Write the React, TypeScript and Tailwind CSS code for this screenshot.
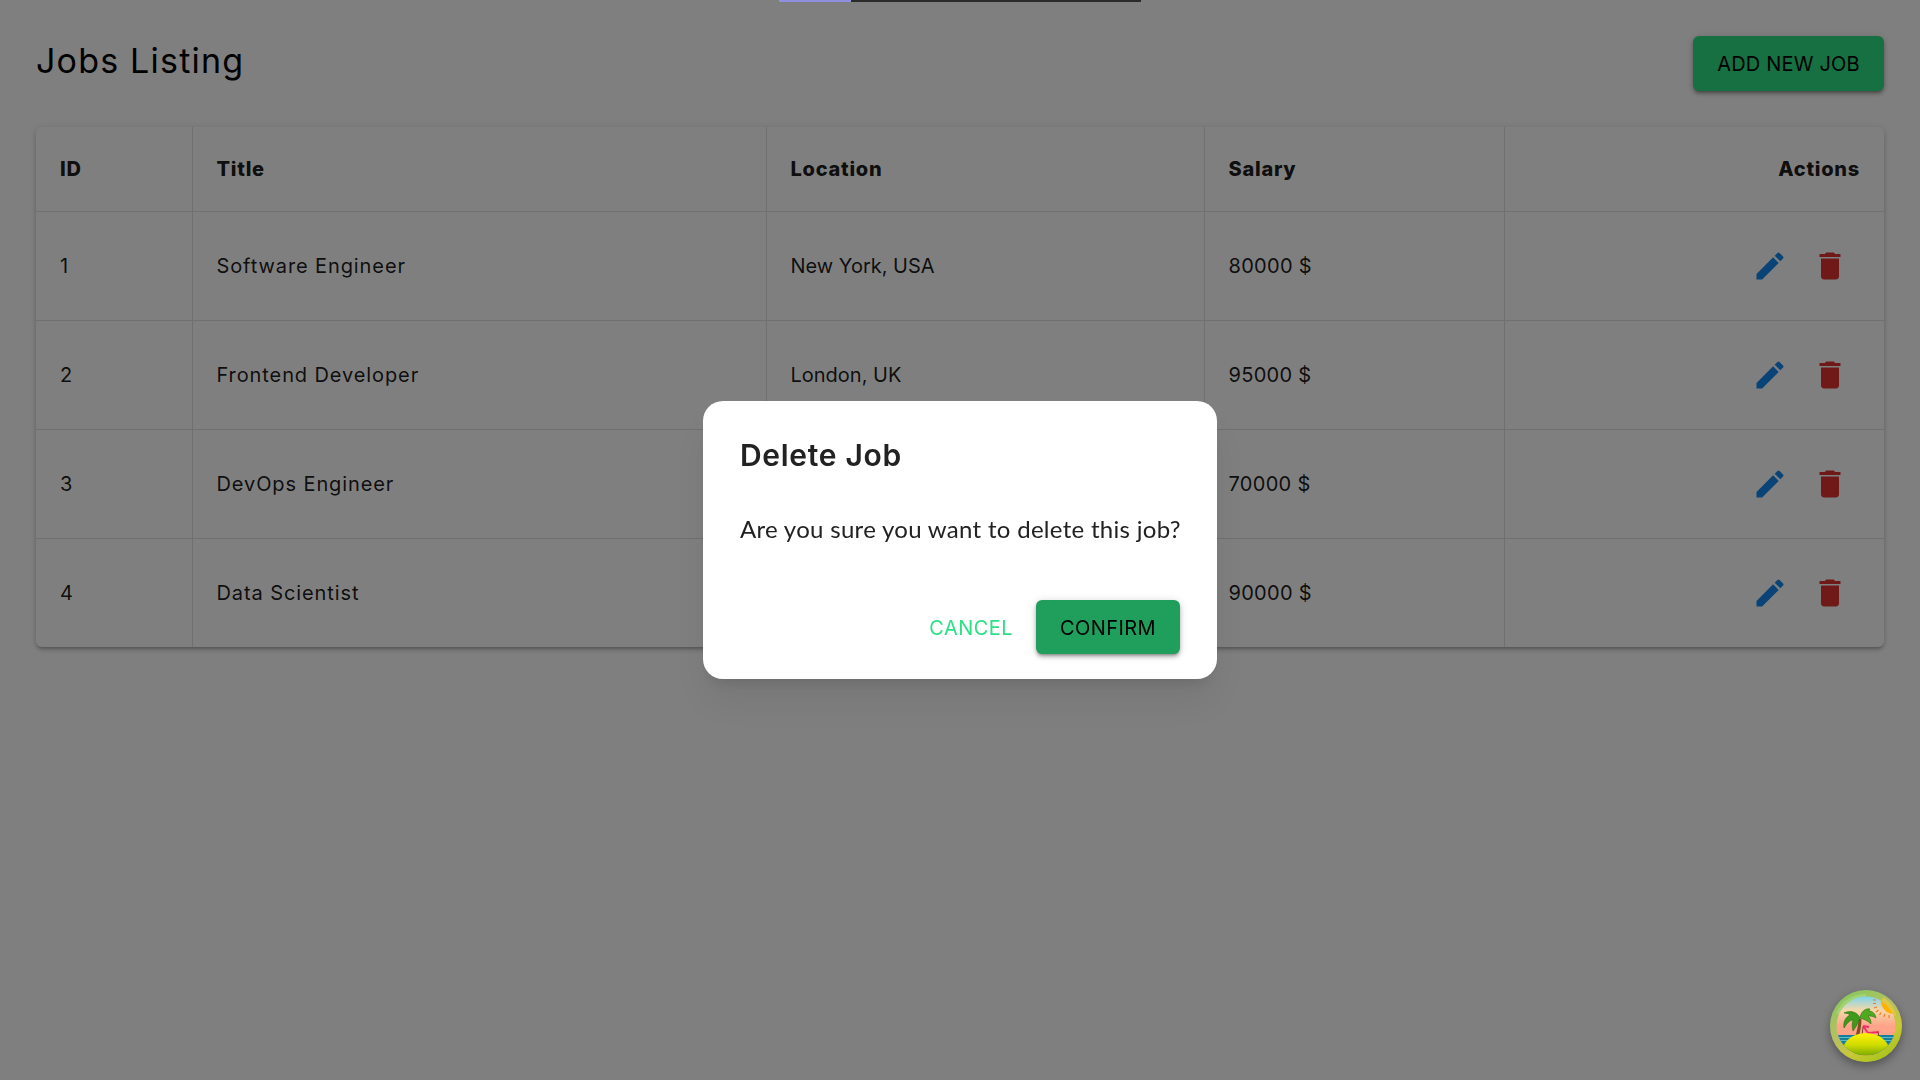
const jobs = [
  { id: 1, title: 'Software Engineer', location: 'New York, USA', salary: '80000 $' },
  { id: 2, title: 'Frontend Developer', location: 'London, UK', salary: '95000 $' },
  { id: 3, title: 'DevOps Engineer', location: 'Berlin, Germany', salary: '70000 $' },
  { id: 4, title: 'Data Scientist', location: 'San Francisco, USA', salary: '90000 $' },
];

function EditIcon() {
  return (
    <svg viewBox="0 0 24 24" className="block w-9 h-9 fill-[#1488ee]">
      <path d="M3 17.25V21h3.75L17.81 9.94l-3.75-3.75L3 17.25zM20.71 7.04c.39-.39.39-1.02 0-1.41l-2.34-2.34a.9959.9959 0 0 0-1.41 0l-1.83 1.83 3.75 3.75 1.83-1.83z" />
    </svg>
  );
}

function TrashIcon() {
  return (
    <svg viewBox="0 0 24 24" className="block w-9 h-9 fill-[#de3232]">
      <path d="M6 19c0 1.1.9 2 2 2h8c1.1 0 2-.9 2-2V7H6v12zM19 4h-3.5l-1-1h-5l-1 1H5v2h14V4z" />
    </svg>
  );
}

// beach badge in the bottom right corner
function BeachLogo() {
  return (
    <svg viewBox="0 0 72 72" className="block w-full h-full">
      <defs>
        <linearGradient id="ring" x1="0.2" y1="0" x2="0.8" y2="1">
          <stop offset="0" stopColor="#86c860" />
          <stop offset="0.45" stopColor="#b8c060" />
          <stop offset="0.7" stopColor="#c8c838" />
          <stop offset="1" stopColor="#a4c414" />
        </linearGradient>
        <linearGradient id="sky" x1="0" y1="0" x2="0" y2="1">
          <stop offset="0.08" stopColor="#78d4f2" />
          <stop offset="0.28" stopColor="#f5d8a8" />
          <stop offset="0.5" stopColor="#ffa488" />
        </linearGradient>
        <linearGradient id="hill" x1="0" y1="0" x2="0" y2="1">
          <stop offset="0" stopColor="#fff200" />
          <stop offset="0.3" stopColor="#d0dc00" />
          <stop offset="0.6" stopColor="#6fa400" />
          <stop offset="1" stopColor="#3f7c00" />
        </linearGradient>
        <clipPath id="inner">
          <circle cx="36" cy="36" r="29.5" />
        </clipPath>
      </defs>
      <circle cx="36" cy="36" r="36" fill="url(#ring)" />
      <path d="M8 24a30 30 0 0 1 28-18" stroke="#a8dc80" strokeWidth="4" fill="none" opacity="0.6" />
      <path d="M52 9a31 31 0 0 1 12 17" stroke="#e8c840" strokeWidth="5" fill="none" opacity="0.8" />
      <g clipPath="url(#inner)">
        <rect x="0" y="0" width="72" height="72" fill="url(#sky)" />
        <circle cx="64" cy="11" r="13" fill="#ffb000" />
        <g stroke="#f47a20" strokeWidth="1.2">
          <path d="M43 10h3M43 13.500h3M44 18l3-1M46 22l2.500-2M49.500 25l1.500-2.500M54 27l.7-3M59 28l.2-3" />
        </g>
        <rect x="0" y="45" width="72" height="20" fill="#177f9c" />
        <path d="M0 47.500h72M0 50.500h72" stroke="#58bcd0" strokeWidth="1" />
        <path d="M28.500 29c0 6-1.500 11-3 17l3.500 0c1.500-6 2.500-11 2.500-17z" fill="#7c4f24" />
        <g stroke="#2a6e12" strokeWidth="0.6">
          <path d="M30 28c-3-6-9-8-16-5 3 0 5 1 6 2-4 2-7 6-6 13 3-5 6-8 9-8-1 3-1 7 0 11 3-4 5-8 7-13z" fill="#3f9a1c" />
          <path d="M30 28c1-6 5-10 10-9-1 1-1 2-1 2 3 0 6 2 7 7-3-2-6-2-8-2 2 2 3 4 3 8-3-3-7-5-11-6z" fill="#4faa22" />
        </g>
        <path d="M33 36l5 7 11-1M33 36l6 1" stroke="#f0306a" strokeWidth="2" fill="none" />
        <path d="M33 37l-1 9M39 43v4M48 42l1 5" stroke="#7a4030" strokeWidth="1" />
        <ellipse cx="36" cy="63" rx="24" ry="20" fill="url(#hill)" />
      </g>
    </svg>
  );
}

export default function App() {
  return (
    <div className="relative min-h-screen bg-white font-['Inter',sans-serif] text-black/90">
      <div className="p-9">
        <div className="flex items-start justify-between mb-9">
          <h1 className="text-[34px] leading-[50px] font-normal tracking-[1.2px] text-black">Jobs Listing</h1>
          <button
            type="button"
            className="h-[55px] w-[191px] rounded-[6px] bg-[#2ce085] text-[20px] font-normal tracking-[0.2px] text-black shadow-[0_3px_3px_-2px_rgba(0,0,0,0.3),0_3px_4px_0_rgba(0,0,0,0.2),0_1px_8px_0_rgba(0,0,0,0.15)]"
          >
            ADD NEW JOB
          </button>
        </div>

        <div className="rounded-[6px] bg-white shadow-[0_3px_3px_-2px_rgba(0,0,0,0.2),0_3px_4px_0_rgba(0,0,0,0.14),0_1px_8px_0_rgba(0,0,0,0.12)] overflow-hidden">
          <table className="w-full table-fixed border-collapse text-[20px] font-normal">
            <colgroup>
              <col className="w-[156px]" />
              <col className="w-[574px]" />
              <col className="w-[438px]" />
              <col className="w-[300px]" />
              <col />
            </colgroup>
            <thead>
              <tr className="h-[84px] border-b border-[#e0e0e0] text-left tracking-[0.75px]">
                <th className="px-6 border-r border-[#e0e0e0] font-extrabold">ID</th>
                <th className="px-6 border-r border-[#e0e0e0] font-extrabold">Title</th>
                <th className="px-6 border-r border-[#e0e0e0] font-extrabold">Location</th>
                <th className="px-6 border-r border-[#e0e0e0] font-extrabold">Salary</th>
                <th className="px-6 text-right font-extrabold">Actions</th>
              </tr>
            </thead>
            <tbody>
              {jobs.map((job, idx) => (
                <tr key={job.id} className={idx < jobs.length - 1 ? 'h-[109px] border-b border-[#e0e0e0]' : 'h-[109px]'}>
                  <td className="px-6 border-r border-[#e0e0e0]">{job.id}</td>
                  <td className="px-6 border-r border-[#e0e0e0] tracking-[0.9px]">{job.title}</td>
                  <td className="px-6 border-r border-[#e0e0e0]">{job.location}</td>
                  <td className="px-6 border-r border-[#e0e0e0] tracking-[0.3px]">{job.salary}</td>
                  <td className="px-6">
                    <div className="flex justify-end">
                      <button type="button" className="p-3"><EditIcon /></button>
                      <button type="button" className="p-3"><TrashIcon /></button>
                    </div>
                  </td>
                </tr>
              ))}
            </tbody>
          </table>
        </div>
      </div>

      {/* Dialog overlay */}
      <div className="fixed inset-0 flex items-center justify-center bg-black/50">
        <div className="w-[514px] h-[278px] rounded-[20px] bg-white pt-9 pb-9 pl-[37px] pr-[37px] flex flex-col shadow-[0_11px_15px_-7px_rgba(0,0,0,0.12),0_24px_38px_3px_rgba(0,0,0,0.06)]">
          <h2 className="text-[30px] leading-[36px] font-semibold tracking-[0.7px] text-[#222]">Delete Job</h2>
          <p className="mt-[38px] font-['Lato',sans-serif] text-[24px] leading-[36px] tracking-[0.3px] font-normal whitespace-nowrap text-[#222]">Are you sure you want to delete this job?</p>
          <div className="mt-auto -mb-[11px] flex items-center justify-end gap-[23px]">
            <button type="button" className="text-[20px] tracking-[0.45px] leading-[30px] pt-px text-[#2ce085]">CANCEL</button>
            <button
              type="button"
              className="h-[54px] w-[144px] rounded-[6px] bg-[#1f9e5c] pt-px text-[20px] tracking-[0.4px] text-black shadow-[0_3px_3px_-2px_rgba(0,0,0,0.3),0_3px_4px_0_rgba(0,0,0,0.2),0_1px_8px_0_rgba(0,0,0,0.15)]"
            >
              CONFIRM
            </button>
          </div>
        </div>
      </div>

      {/* top loading bar */}
      <div className="fixed top-0 left-[779px] flex h-[2px] w-[362px]">
        <div className="w-[72px] bg-[#8f8fdf]" />
        <div className="flex-1 bg-[#2a2a2a]" />
      </div>

      <div className="fixed right-[18px] bottom-[18px] w-[72px] h-[72px] rounded-full shadow-[0_4px_10px_rgba(0,0,0,0.35)]">
        <BeachLogo />
      </div>
    </div>
  );
}
